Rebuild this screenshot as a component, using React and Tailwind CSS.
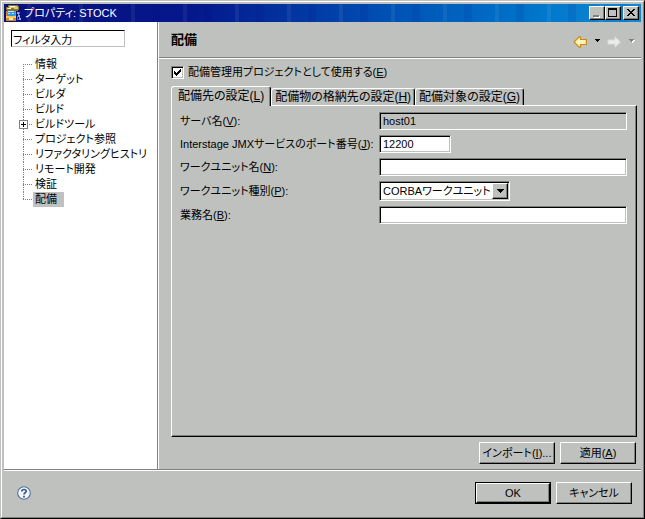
import { useState } from 'react';

const RAISED =
  'border border-t-white border-l-white border-r-black border-b-black shadow-[inset_-1px_-1px_0_#808080]';
const SUNKEN =
  'border border-t-[#808080] border-l-[#808080] border-r-white border-b-white shadow-[inset_1px_1px_0_#000,inset_-1px_-1px_0_#c0c0c0]';
const ETCHED = 'border-t border-t-[#808080] shadow-[inset_0_1px_0_#fff]';

const TREE = [
  { label: '情報' },
  { label: 'ターゲット' },
  { label: 'ビルダ' },
  { label: 'ビルド' },
  { label: 'ビルドツール', expandable: true },
  { label: 'プロジェクト参照' },
  { label: 'リファクタリングヒストリ' },
  { label: 'リモート開発' },
  { label: '検証' },
  { label: '配備' },
];

const TABS = [
  { label: '配備先の設定', accessKey: 'L' },
  { label: '配備物の格納先の設定', accessKey: 'H' },
  { label: '配備対象の設定', accessKey: 'G' },
];

function AccessLabel({ text, accessKey, suffix = '' }) {
  return (
    <>
      {text}(<u className="underline-offset-1">{accessKey}</u>){suffix}
    </>
  );
}

function AppIcon() {
  return (
    <svg
      width="17"
      height="16"
      viewBox="0 0 17 16"
      shapeRendering="crispEdges"
      className="shrink-0"
      aria-hidden="true"
    >
      <path fill="#8a7428" d="M3 0h10v1h1v4h-1v1H2V5H1V2h2z" />
      <path fill="#d8c878" d="M4 1h8v1h1v2H9V3H4v1H2V3h2z" />
      <path fill="#fff8d0" d="M5 1h5v1H5zM3 3h3v1H3z" />
      <path fill="#d88818" d="M1 6h10v10H1z" />
      <path fill="#3898e0" d="M2 6h8v5H2z" />
      <path fill="#b8e4ff" d="M3 6h6v1H3zM3 8h2v1H3zM7 8h2v1H7z" />
      <path fill="#ffc858" d="M1 11h10v2H1z" />
      <path fill="#fff0b8" d="M4 13h4v2H4z" />
      <path fill="#88a8d8" d="M12 7h2v3h1v3h1v2h-2v-3h-1v-3h-1z" />
      <path fill="#5070b0" d="M14 7h1v2h-1zM12 11h1v3h1v1h-2z" />
    </svg>
  );
}

function TreeGuide({ last, first, expandable }) {
  return (
    <svg
      width="14"
      height="15"
      viewBox="0 0 14 15"
      shapeRendering="crispEdges"
      className="shrink-0"
      aria-hidden="true"
    >
      <path
        d={`M4.5 ${first ? 7 : 0}V${last ? 8 : 15}M4 7.5H13`}
        fill="none"
        stroke="#808080"
        strokeDasharray="1 1"
      />
      {expandable && (
        <>
          <rect x="0.5" y="3.5" width="8" height="8" fill="#fff" stroke="#808080" />
          <path d="M2 7.5h5M4.5 5v5" stroke="#000" />
        </>
      )}
    </svg>
  );
}

function ArrowIcon({ disabled }) {
  return (
    <svg width="15" height="12" viewBox="0 0 15 12" aria-hidden="true">
      {disabled ? (
        <path d="M1 4h7V.8L13.4 6 8 11.2V8H1z" fill="#ececec" stroke="#dcdcda" />
      ) : (
        <path
          d="M13.4 3.5H7.5V.8L6.2.8 1 6l5.2 5.2h1.3V8.5h5.9z"
          fill="#fff0b4"
          stroke="#c88a1c"
          strokeWidth="1.2"
        />
      )}
    </svg>
  );
}

function CaretIcon({ disabled }) {
  return (
    <svg width="7" height="5" viewBox="0 0 7 5" shapeRendering="crispEdges" aria-hidden="true">
      {disabled && <path d="M2 1h5v1H6v1H5v1H4V3H3V2H2z" fill="#fff" />}
      <path d="M1 0h5v1H5v1H4v1H3V2H2V1H1z" fill={disabled ? '#808080' : '#000'} />
    </svg>
  );
}

function HelpIcon() {
  return (
    <svg width="14" height="14" viewBox="0 0 14 14" aria-hidden="true">
      <circle cx="7" cy="7" r="6.3" fill="#f2f7fc" stroke="#526f9a" strokeWidth="1.1" />
      <path
        d="M4.8 5.5C4.8 2.8 9.3 2.9 9.2 5.3 9.1 6.8 7 6.8 7 8.6"
        fill="none"
        stroke="#3b5887"
        strokeWidth="1.7"
      />
      <path d="M6.1 9.7h1.8v1.7H6.1z" fill="#3b5887" />
    </svg>
  );
}

function CaptionButton({ label, children }) {
  return (
    <button
      type="button"
      aria-label={label}
      className={`flex h-[14px] w-4 items-center justify-center bg-[#bfc1be] ${RAISED}`}
    >
      <svg width="12" height="10" viewBox="0 0 12 10" shapeRendering="crispEdges" aria-hidden="true">
        {children}
      </svg>
    </button>
  );
}

function TitleBar() {
  return (
    <header className="flex h-[18px] items-center bg-[repeating-linear-gradient(90deg,transparent_0_23px,#ffffff10_23px_27px,transparent_27px_44px,#00008018_44px_52px),linear-gradient(90deg,#08107c_0%,#04188c_30%,#0050b4_60%,#0078cc_85%,#1488d4_100%)] pr-0.5 pl-px text-white">
      <AppIcon />
      <h1 className="ml-0.5 flex-1">プロパティ: STOCK</h1>
      <div className="flex">
        <CaptionButton label="最小化">
          <path d="M3 8h6v2H3z" fill="#fff" />
          <path d="M2 7h6v2H2z" fill="#808080" />
        </CaptionButton>
        <CaptionButton label="最大化">
          <path d="M1 0h9v9H1zM2 2v6h7V2z" fill="#000" fillRule="evenodd" />
        </CaptionButton>
        <div className="ml-0.5">
          <CaptionButton label="閉じる">
            <path
              d="M2 1h2v1h1v1h2V2h1V1h2v1H9v1H8v1H7v1h1v1h1v1h1v1H8V7H7V6H5v1H4v1H2V7h1V6h1V5h1V4H4V3H3V2H2z"
              fill="#000"
            />
          </CaptionButton>
        </div>
      </div>
    </header>
  );
}

function PushButton({ children, isDefault }) {
  return (
    <span className={isDefault ? 'border border-black' : ''}>
      <button
        type="button"
        className={`block bg-[#bfc1be] text-center whitespace-nowrap ${RAISED} ${
          isDefault ? 'h-5 w-[74px]' : 'h-[22px] w-[76px]'
        }`}
      >
        {children}
      </button>
    </span>
  );
}

function FormRow({ id, text, accessKey, children }) {
  return (
    <>
      <label htmlFor={id} className="whitespace-nowrap">
        <AccessLabel text={text} accessKey={accessKey} suffix=":" />
      </label>
      {children}
    </>
  );
}

export default function App() {
  const [page, setPage] = useState('配備');
  const [tab, setTab] = useState('L');
  const [managed, setManaged] = useState(true);

  return (
    <div className="flex min-h-screen flex-col border border-t-[#bfc1be] border-l-[#bfc1be] border-r-black border-b-black bg-[#bfc1be] font-['Liberation_Sans','Noto_Sans_CJK_JP',sans-serif] text-[11px] leading-[15px] text-black [font-feature-settings:'palt']">
      <div className="flex flex-1 flex-col border border-t-white border-l-white border-r-[#808080] border-b-[#808080] p-0.5">
        <TitleBar />

        <div className="flex flex-1">
          <aside className="flex w-[154px] shrink-0 flex-col border-r border-[#808080] bg-white pt-2 pl-[7px]">
            <input
              type="text"
              aria-label="フィルタ入力"
              defaultValue="フィルタ入力"
              className="h-[17px] w-[114px] border border-t-black border-l-black border-r-[#c0c0c0] border-b-[#c0c0c0] px-px outline-none"
            />
            <ul className="mt-[10px] pl-2">
              {TREE.map((item, index) => (
                <li key={item.label} className="flex h-[15px]">
                  <TreeGuide
                    first={index === 0}
                    last={index === TREE.length - 1}
                    expandable={item.expandable}
                  />
                  <button
                    type="button"
                    onClick={() => setPage(item.label)}
                    className={`h-[15px] pr-[7px] pl-0.5 whitespace-nowrap ${
                      page === item.label ? 'bg-[#bfc1be]' : ''
                    }`}
                  >
                    {item.label}
                  </button>
                </li>
              ))}
            </ul>
          </aside>

          <main className="flex min-w-0 flex-1 flex-col border-l border-white">
            <div className="flex h-[35px] items-center justify-between pr-[6px] pl-3">
              <h2 className="text-[13px] font-bold">配備</h2>
              <nav className="flex items-center pt-1">
                <button type="button" aria-label="戻る" className="flex">
                  <ArrowIcon />
                </button>
                <button type="button" aria-label="戻る履歴" className="ml-1.5 flex">
                  <CaretIcon />
                </button>
                <button type="button" aria-label="進む" disabled className="ml-1.5 flex">
                  <ArrowIcon disabled />
                </button>
                <button type="button" aria-label="進む履歴" disabled className="ml-1.5 flex">
                  <CaretIcon disabled />
                </button>
              </nav>
            </div>
            <div className={`h-0.5 ${ETCHED}`} />

            <div className="flex flex-1 flex-col pt-1.5 pr-1 pb-[5px] pl-3">
              <div className="flex items-center gap-1">
                <span className="relative flex">
                  <input
                    id="managed"
                    type="checkbox"
                    checked={managed}
                    onChange={(e) => setManaged(e.target.checked)}
                    className={`size-[13px] appearance-none bg-white ${SUNKEN}`}
                  />
                  {managed && (
                    <svg
                      width="7"
                      height="7"
                      viewBox="0 0 7 7"
                      shapeRendering="crispEdges"
                      className="pointer-events-none absolute top-[3px] left-[3px]"
                      aria-hidden="true"
                    >
                      <path d="M0 2h1v1h1v1h1V3h1V2h1V1h1V0h1v3H6v1H5v1H4v1H3v1H2V6H1V5H0z" />
                    </svg>
                  )}
                </span>
                <label htmlFor="managed">
                  <AccessLabel text="配備管理用プロジェクトとして使用する" accessKey="E" />
                </label>
              </div>

              <div role="tablist" className="mt-[6px] flex items-end text-[12px] leading-[15px]">
                {TABS.map(({ label, accessKey }) => (
                  <button
                    key={accessKey}
                    type="button"
                    role="tab"
                    aria-selected={tab === accessKey}
                    onClick={() => setTab(accessKey)}
                    className={`rounded-t-[3px] border border-t-white border-l-white border-r-black border-b-0 whitespace-nowrap shadow-[inset_-1px_0_0_#808080] ${
                      tab === accessKey
                        ? 'relative -mb-px h-5 bg-[#bfc1be] px-1.5 pb-px'
                        : 'h-[17px] px-[3px]'
                    }`}
                  >
                    <AccessLabel text={label} accessKey={accessKey} />
                  </button>
                ))}
              </div>

              <div role="tabpanel" className={`flex-1 pt-[6px] pr-[9px] pl-2 ${RAISED}`}>
                <form className="grid grid-cols-[199px_1fr] items-center gap-y-[5px]">
                  <FormRow id="server" text="サーバ名" accessKey="V">
                    <input
                      id="server"
                      readOnly
                      defaultValue="host01"
                      className={`h-[18px] w-full bg-[#bfc1be] px-[3px] outline-none ${SUNKEN}`}
                    />
                  </FormRow>
                  <FormRow id="port" text="Interstage JMXサービスのポート番号" accessKey="J">
                    <input
                      id="port"
                      defaultValue="12200"
                      className={`h-[18px] w-[72px] bg-white px-[3px] outline-none ${SUNKEN}`}
                    />
                  </FormRow>
                  <FormRow id="unit" text="ワークユニット名" accessKey="N">
                    <input
                      id="unit"
                      className={`h-[18px] w-full bg-white px-[3px] outline-none ${SUNKEN}`}
                    />
                  </FormRow>
                  <FormRow id="kind" text="ワークユニット種別" accessKey="P">
                    <div className="relative w-[131px]">
                      <select
                        id="kind"
                        className={`block h-5 w-full appearance-none bg-white pl-[3px] outline-none ${SUNKEN}`}
                      >
                        <option>CORBAワークユニット</option>
                      </select>
                      <span
                        className={`pointer-events-none absolute inset-y-0.5 right-0.5 flex w-4 items-center justify-center bg-[#bfc1be] ${RAISED}`}
                      >
                        <svg width="7" height="4" viewBox="0 0 7 4" shapeRendering="crispEdges">
                          <path d="M0 0h7v1H6v1H5v1H4v1H3V3H2V2H1V1H0z" />
                        </svg>
                      </span>
                    </div>
                  </FormRow>
                  <FormRow id="job" text="業務名" accessKey="B">
                    <input
                      id="job"
                      className={`h-[18px] w-full bg-white px-[3px] outline-none ${SUNKEN}`}
                    />
                  </FormRow>
                </form>
              </div>

              <div className="mt-[5px] flex justify-end gap-[5px] pr-px">
                <PushButton>
                  <AccessLabel text="インポート" accessKey="I" suffix="..." />
                </PushButton>
                <PushButton>
                  <AccessLabel text="適用" accessKey="A" />
                </PushButton>
              </div>
            </div>
          </main>
        </div>

        <div className={`h-0.5 ${ETCHED}`} />
        <footer className="flex items-center justify-between pt-[11px] pr-[9px] pb-[11px] pl-[13px]">
          <button type="button" aria-label="ヘルプ">
            <HelpIcon />
          </button>
          <div className="flex gap-[5px]">
            <PushButton isDefault>OK</PushButton>
            <PushButton>キャンセル</PushButton>
          </div>
        </footer>
      </div>
    </div>
  );
}
